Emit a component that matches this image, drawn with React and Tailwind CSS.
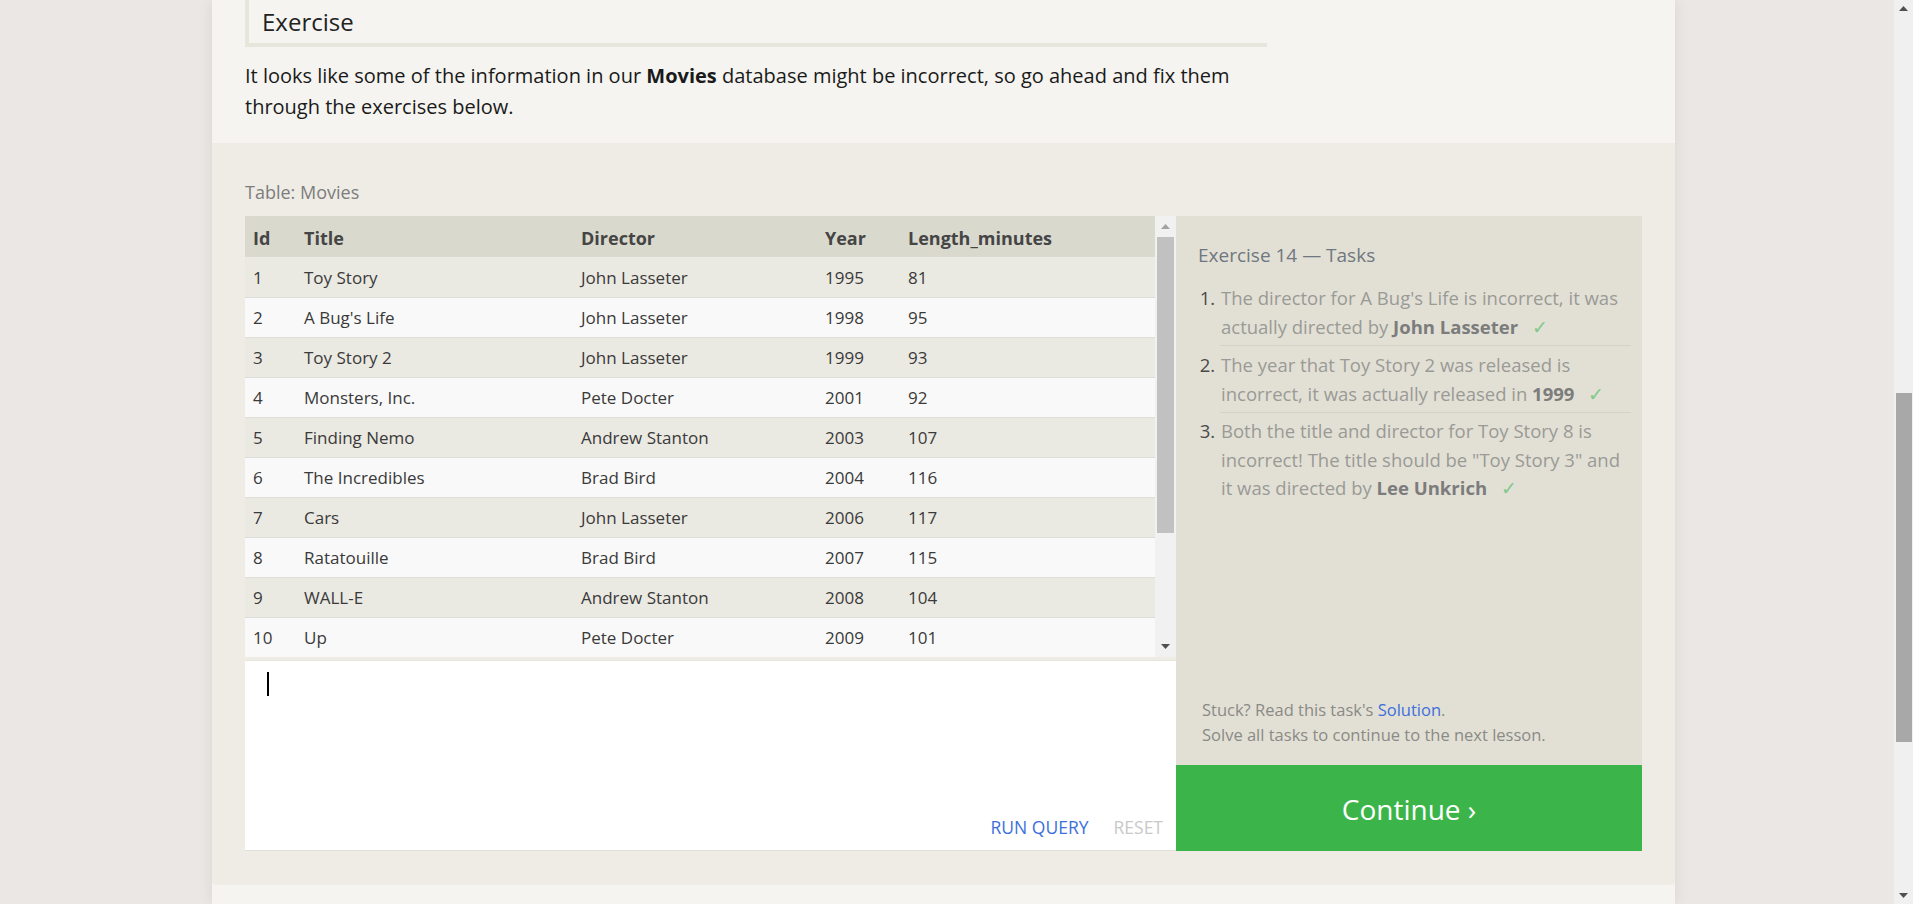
const movies = [
  [1, "Toy Story", "John Lasseter", 1995, 81],
  [2, "A Bug's Life", "John Lasseter", 1998, 95],
  [3, "Toy Story 2", "John Lasseter", 1999, 93],
  [4, "Monsters, Inc.", "Pete Docter", 2001, 92],
  [5, "Finding Nemo", "Andrew Stanton", 2003, 107],
  [6, "The Incredibles", "Brad Bird", 2004, 116],
  [7, "Cars", "John Lasseter", 2006, 117],
  [8, "Ratatouille", "Brad Bird", 2007, 115],
  [9, "WALL-E", "Andrew Stanton", 2008, 104],
  [10, "Up", "Pete Docter", 2009, 101],
  [11, "Toy Story 8", "El Directore", 2010, 103],
  [12, "Cars 2", "John Lasseter", 2011, 120],
  [13, "Brave", "Brenda Chapman", 2012, 102],
  [14, "Monsters University", "Dan Scanlon", 2013, 110],
]

function Check() {
  return <span className="ml-[14px] text-[19px] font-light text-[#80c98a]">✓</span>
}

function Tasks() {
  return (
    <ol className="mt-[16px] mr-[11px] list-decimal pl-[22px] text-[18.5px] leading-[28.5px] text-[#9a9a96] marker:text-[#4a4a4a]">
      <li className="border-b border-[#d4d2c7] pb-[4px] pl-[1px]">
        The director for A Bug's Life is incorrect, it was
        <br />
        actually directed by <b className="text-[#7c7c7c]">John Lasseter</b>
        <Check />
      </li>
      <li className="border-b border-[#d4d2c7] pt-[5px] pb-[4px] pl-[1px]">
        The year that Toy Story 2 was released is
        <br />
        incorrect, it was actually released in <b className="text-[#7c7c7c]">1999</b>
        <Check />
      </li>
      <li className="pt-[4px] pl-[1px]">
        Both the title and director for Toy Story 8 is
        <br />
        incorrect! The title should be "Toy Story 3" and
        <br />
        it was directed by <b className="text-[#7c7c7c]">Lee Unkrich</b>
        <Check />
      </li>
    </ol>
  )
}

function MoviesTable() {
  return (
    <div className="flex h-[441px] bg-[#f1f1f1]">
      <div className="flex-1 overflow-hidden">
        <table className="w-full table-fixed border-collapse text-left text-[17px] text-[#3a3a3a]">
          <colgroup>
            <col className="w-[51px]" />
            <col className="w-[277px]" />
            <col className="w-[244px]" />
            <col className="w-[83px]" />
            <col />
          </colgroup>
          <thead>
            <tr className="h-[41px] bg-[#dad9ce] text-[18px] font-bold text-[#454545]">
              <th className="pl-2 pt-[3px]">Id</th>
              <th className="pl-2 pt-[3px]">Title</th>
              <th className="pl-2 pt-[3px]">Director</th>
              <th className="pl-2 pt-[3px]">Year</th>
              <th className="pl-2 pt-[3px]">Length_minutes</th>
            </tr>
          </thead>
          <tbody>
            {movies.map((m, i) => (
              <tr
                key={m[0]}
                className={
                  "h-[40px] border-b border-[#dfded8] " + (i % 2 === 0 ? "bg-[#eae9e2]" : "bg-[#f9f9f9]")
                }
              >
                {m.map((v, j) => (
                  <td key={j} className="pl-2 pt-[2px]">
                    {v}
                  </td>
                ))}
              </tr>
            ))}
          </tbody>
        </table>
      </div>
      <div className="flex w-[21px] flex-col items-center">
        <div className="flex h-[21px] items-center justify-center">
          <svg width="9" height="5" viewBox="0 0 9 5">
            <path d="M4.5 0L9 5H0z" fill="#a3a3a3" />
          </svg>
        </div>
        <div className="h-[296px] w-[17px] bg-[#c1c1c1]" />
        <div className="flex-1" />
        <div className="flex h-[21px] items-center justify-center">
          <svg width="9" height="5" viewBox="0 0 9 5">
            <path d="M0 0H9L4.5 5z" fill="#505050" />
          </svg>
        </div>
      </div>
    </div>
  )
}

function Editor() {
  return (
    <div className="mt-[3px] flex h-[191px] flex-col border-t border-[#e6e5de] border-b border-b-[#e2e0d8] bg-white">
      <div className="flex-1 pl-[22px] pt-[11px]">
        <div className="h-[24px] w-[2px] bg-black" />
      </div>
      <div className="flex justify-end gap-[25px] pr-[13px] pb-[10px] text-[17.5px] uppercase">
        <span className="text-[#3d6fdc]">Run Query</span>
        <span className="text-[#c9c9c9]">Reset</span>
      </div>
    </div>
  )
}

function App() {
  return (
    <div className="flex h-[904px] overflow-hidden bg-[#ebe7e4] font-['Open_Sans',sans-serif]">
      <div className="w-[212px] shrink-0" />
      <main className="flex w-[1463px] shrink-0 flex-col bg-[#f5f4f0] shadow-[0_0_14px_rgba(0,0,0,0.08)]">
        <section className="px-[33px] pb-[21px]">
          <div className="flex h-[47px] w-[1022px] items-start border-l-4 border-b-4 border-[#e7e6dd] pl-[13px] pt-[6px]">
            <h2 className="text-[24px] leading-[32px] text-[#222]">Exercise</h2>
          </div>
          <p className="mt-[13px] w-[1030px] text-[20px] leading-[31px] text-[#1a1a1a]">
            It looks like some of the information in our <b>Movies</b> database might be incorrect, so go ahead and fix
            them through the exercises below.
          </p>
        </section>
        <section className="rounded-b-sm bg-[#efece5] px-[33px] pt-[36px] pb-[34px]">
          <div className="mb-[11px] text-[18px] leading-[26px] text-[#7d7d7d]">Table: Movies</div>
          <div className="flex">
            <div className="w-[931px] shrink-0">
              <MoviesTable />
              <Editor />
            </div>
            <div className="flex flex-1 flex-col bg-[#e2e0d5]">
              <div className="flex-1 pl-[22px] pt-[26px]">
                <h3 className="text-[19px] leading-[26px] text-[#6f7780]">Exercise 14 — Tasks</h3>
                <Tasks />
              </div>
              <div className="px-[26px] pb-[18px] text-[16.5px] leading-[25px] text-[#8a8a86]">
                <div>
                  Stuck? Read this task's <span className="text-[#3d6fdc]">Solution</span>.
                </div>
                <div>Solve all tasks to continue to the next lesson.</div>
              </div>
              <div className="flex h-[86px] items-center justify-center bg-[#3bb54a] pt-[1px] text-[28px] text-white">
                Continue ›
              </div>
            </div>
          </div>
        </section>
        <div className="flex-1" />
      </main>
      <div className="flex-1" />
      <div className="flex w-[19px] shrink-0 flex-col items-center bg-[#f0f0f0]">
        <div className="flex h-[17px] items-center justify-center">
          <svg width="9" height="5" viewBox="0 0 9 5">
            <path d="M4.5 0L9 5H0z" fill="#505050" />
          </svg>
        </div>
        <div className="h-[376px]" />
        <div className="h-[349px] w-[16px] bg-[#a8a8a8]" />
        <div className="flex-1" />
        <div className="flex h-[17px] items-center justify-center">
          <svg width="9" height="5" viewBox="0 0 9 5">
            <path d="M0 0H9L4.5 5z" fill="#505050" />
          </svg>
        </div>
      </div>
    </div>
  )
}

export default App
